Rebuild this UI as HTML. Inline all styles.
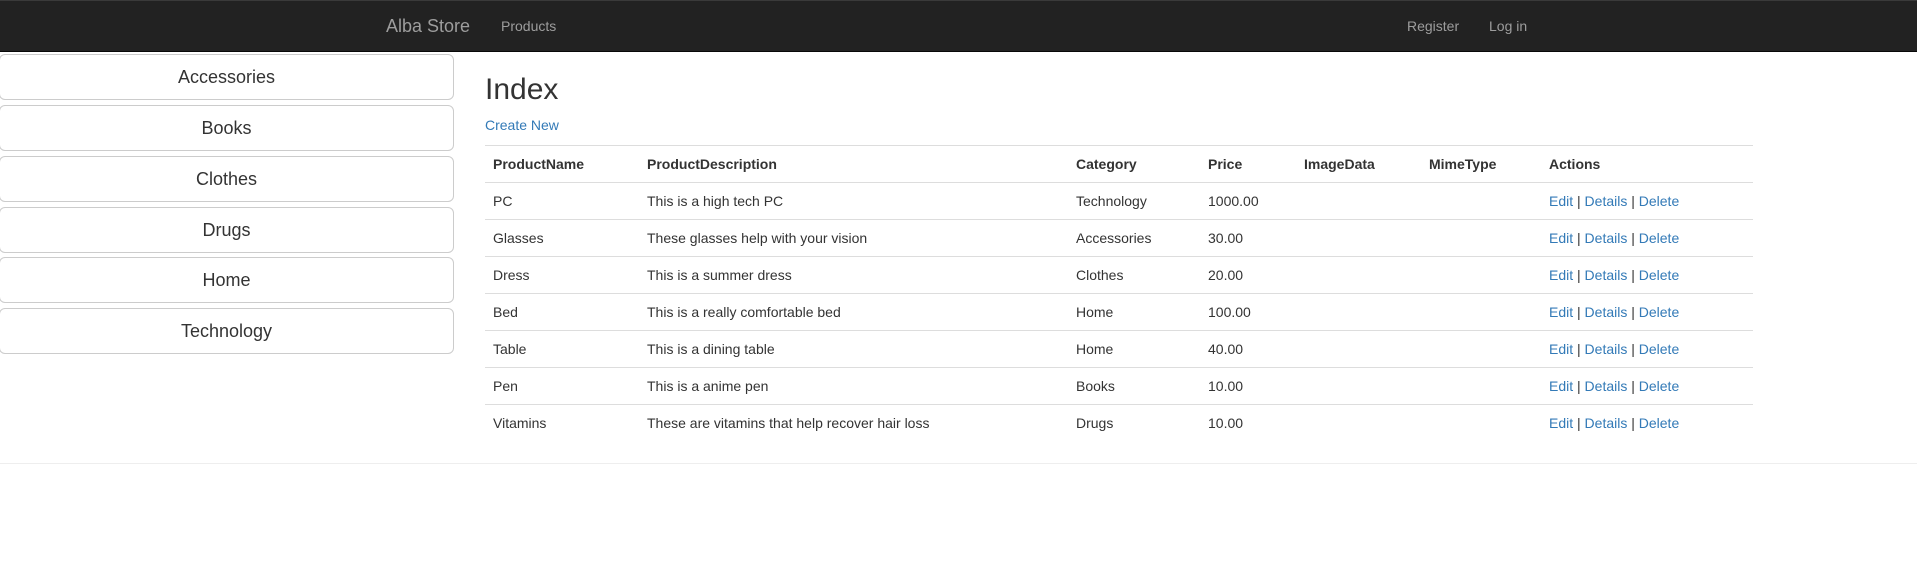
<!DOCTYPE html>
<html><head><meta charset="utf-8"><style>
body{margin:0;width:1917px;height:576px;background:#fff;font-family:"Liberation Sans",Arial,sans-serif;font-size:14px;color:#333;position:relative;overflow:hidden}
.nav{position:absolute;left:0;top:0;width:1917px;height:52px;background:#222;border-top:1px solid #3a3a3a;box-sizing:border-box;border-bottom:1px solid #080808}
.nav span{position:absolute;color:#9d9d9d;top:17px;font-size:14px}
.nav .brand{font-size:18px;top:15px}
.btn{position:absolute;left:-1px;width:455px;height:46px;box-sizing:border-box;border:1px solid #ccc;border-radius:6px;font-size:18px;text-align:center;line-height:44px;color:#333;background:#fff}
h2{position:absolute;left:485px;top:73px;margin:0;font-size:30px;font-weight:500}
a{color:#337ab7;text-decoration:none}
.cn{position:absolute;left:485px;top:117px}
table{position:absolute;left:485px;top:145px;width:1268px;border-collapse:collapse}
td,th{padding:8px;line-height:20px;border-top:1px solid #ddd;text-align:left;vertical-align:top}
th{border-bottom:1px solid #ddd;font-weight:bold}
.hr{position:absolute;left:0;top:463px;width:1917px;border-top:1px solid #eee}
</style></head><body>
<div class="nav"><span class="brand" style="left:386px">Alba Store</span><span style="left:501px">Products</span><span style="left:1407px">Register</span><span style="left:1489px">Log in</span></div>
<div class="btn" style="top:54px">Accessories</div>
<div class="btn" style="top:105px">Books</div>
<div class="btn" style="top:156px">Clothes</div>
<div class="btn" style="top:207px">Drugs</div>
<div class="btn" style="top:257px">Home</div>
<div class="btn" style="top:308px">Technology</div>
<h2>Index</h2>
<a class="cn">Create New</a>
<table>
<colgroup><col style="width:154px"><col style="width:429px"><col style="width:132px"><col style="width:96px"><col style="width:125px"><col style="width:120px"><col></colgroup>
<tr><th>ProductName</th><th>ProductDescription</th><th>Category</th><th>Price</th><th>ImageData</th><th>MimeType</th><th>Actions</th></tr>
<tr><td>PC</td><td>This is a high tech PC</td><td>Technology</td><td>1000.00</td><td></td><td></td><td><a>Edit</a> | <a>Details</a> | <a>Delete</a></td></tr>
<tr><td>Glasses</td><td>These glasses help with your vision</td><td>Accessories</td><td>30.00</td><td></td><td></td><td><a>Edit</a> | <a>Details</a> | <a>Delete</a></td></tr>
<tr><td>Dress</td><td>This is a summer dress</td><td>Clothes</td><td>20.00</td><td></td><td></td><td><a>Edit</a> | <a>Details</a> | <a>Delete</a></td></tr>
<tr><td>Bed</td><td>This is a really comfortable bed</td><td>Home</td><td>100.00</td><td></td><td></td><td><a>Edit</a> | <a>Details</a> | <a>Delete</a></td></tr>
<tr><td>Table</td><td>This is a dining table</td><td>Home</td><td>40.00</td><td></td><td></td><td><a>Edit</a> | <a>Details</a> | <a>Delete</a></td></tr>
<tr><td>Pen</td><td>This is a anime pen</td><td>Books</td><td>10.00</td><td></td><td></td><td><a>Edit</a> | <a>Details</a> | <a>Delete</a></td></tr>
<tr><td>Vitamins</td><td>These are vitamins that help recover hair loss</td><td>Drugs</td><td>10.00</td><td></td><td></td><td><a>Edit</a> | <a>Details</a> | <a>Delete</a></td></tr>
</table>
<div class="hr"></div>
</body></html>
